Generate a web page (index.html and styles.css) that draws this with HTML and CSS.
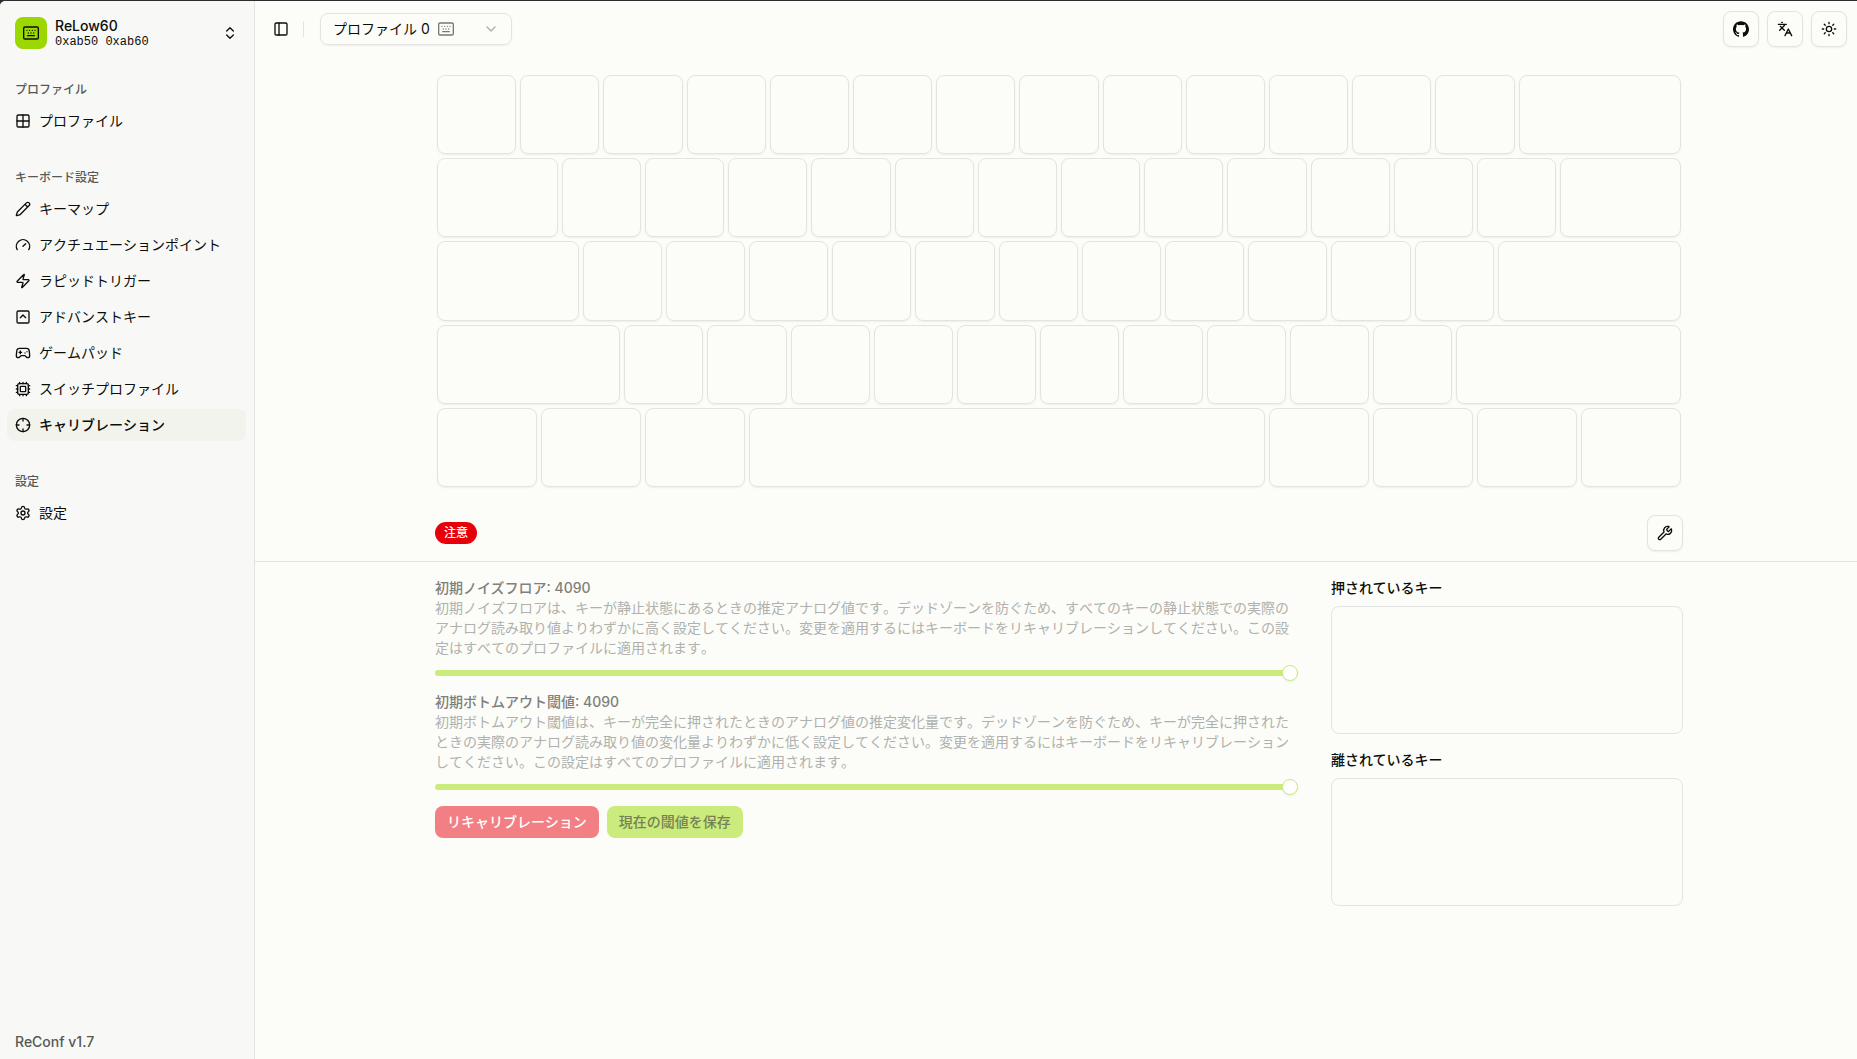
FILE: index.html
```html
<!DOCTYPE html>
<html lang="ja">
<head>
<meta charset="utf-8">
<meta name="viewport" content="width=device-width, initial-scale=1">
<title>ReConf</title>
<link rel="stylesheet" href="styles.css">
</head>
<body>
<div class="app">
  <aside class="sidebar">
    <button class="device" type="button">
      <span class="device-logo"><svg class="icon" viewBox="0 0 24 24"><rect x="1" y="3" width="22" height="18" rx="2"/><path d="M6 8h.01M10 8h.01M14 8h.01M18 8h.01M8 12h.01M12 12h.01M16 12h.01M7 16h10"/></svg></span>
      <span class="device-text"><span class="device-name">ReLow60</span><span class="device-id">0xab50 0xab60</span></span>
      <svg class="icon" viewBox="0 0 24 24"><path d="m7 15 5 5 5-5M7 9l5-5 5 5"/></svg>
    </button>
    <nav class="nav">
      <section class="group">
        <h2 class="group-label">プロファイル</h2>
        <a class="item" href="#profiles"><svg class="icon" viewBox="0 0 24 24"><rect x="3" y="3" width="18" height="18" rx="2"/><path d="M12 3v18M3 12h18"/></svg>プロファイル</a>
      </section>
      <section class="group">
        <h2 class="group-label">キーボード設定</h2>
        <a class="item" href="#keymap"><svg class="icon" viewBox="0 0 24 24"><path d="M21.174 6.812a1 1 0 0 0-3.986-3.987L3.842 16.174a2 2 0 0 0-.5.83l-1.321 4.352a.5.5 0 0 0 .623.622l4.353-1.32a2 2 0 0 0 .83-.497zM15 5l4 4"/></svg>キーマップ</a>
        <a class="item" href="#actuation"><svg class="icon" viewBox="0 0 24 24"><path d="m12 14 4-4M3.34 19a10 10 0 1 1 17.32 0"/></svg>アクチュエーションポイント</a>
        <a class="item" href="#rapid-trigger"><svg class="icon" viewBox="0 0 24 24"><path d="M4 14a1 1 0 0 1-.78-1.63l9.9-10.2a.5.5 0 0 1 .86.46l-1.92 6.02A1 1 0 0 0 13 10h7a1 1 0 0 1 .78 1.63l-9.9 10.2a.5.5 0 0 1-.86-.46l1.92-6.02A1 1 0 0 0 11 14z"/></svg>ラピッドトリガー</a>
        <a class="item" href="#advanced"><svg class="icon" viewBox="0 0 24 24"><rect x="3" y="3" width="18" height="18" rx="2"/><path d="m8 13 4-4 4 4"/></svg>アドバンストキー</a>
        <a class="item" href="#gamepad"><svg class="icon" viewBox="0 0 24 24"><path d="M6 11h4M8 9v4M15 12h.01M18 10h.01M17.32 5H6.68a4 4 0 0 0-3.978 3.59c-.006.052-.01.101-.017.152C2.604 9.416 2 14.456 2 16a3 3 0 0 0 3 3c1 0 1.500-.5 2-1l1.414-1.414A2 2 0 0 1 9.828 16h4.344a2 2 0 0 1 1.414.586L17 18c.5.5 1 1 2 1a3 3 0 0 0 3-3c0-1.545-.604-6.584-.685-7.258-.007-.05-.011-.1-.017-.151A4 4 0 0 0 17.320 5z"/></svg>ゲームパッド</a>
        <a class="item" href="#switches"><svg class="icon" viewBox="0 0 24 24"><rect x="4" y="4" width="16" height="16" rx="2"/><rect x="8" y="8" width="8" height="8" rx="1"/><path d="M12 20v2M12 2v2M17 20v2M17 2v2M2 12h2M2 17h2M2 7h2M20 12h2M20 17h2M20 7h2M7 20v2M7 2v2"/></svg>スイッチプロファイル</a>
        <a class="item item-active" href="#calibration" aria-current="page"><svg class="icon" viewBox="0 0 24 24"><circle cx="12" cy="12" r="10"/><path d="M22 12h-4M6 12H2M12 6V2M12 22v-4"/></svg>キャリブレーション</a>
      </section>
      <section class="group">
        <h2 class="group-label">設定</h2>
        <a class="item" href="#settings"><svg class="icon" viewBox="0 0 24 24"><path d="M9.671 4.136a2.340 2.340 0 0 1 4.659 0 2.340 2.340 0 0 0 3.319 1.915 2.340 2.340 0 0 1 2.330 4.033 2.340 2.340 0 0 0 0 3.831 2.340 2.340 0 0 1-2.330 4.033 2.340 2.340 0 0 0-3.319 1.915 2.340 2.340 0 0 1-4.659 0 2.340 2.340 0 0 0-3.320-1.915 2.340 2.340 0 0 1-2.330-4.033 2.340 2.340 0 0 0 0-3.831A2.340 2.340 0 0 1 6.350 6.051a2.340 2.340 0 0 0 3.319-1.915"/><circle cx="12" cy="12" r="3"/></svg>設定</a>
      </section>
    </nav>
    <footer class="version">ReConf v1.7</footer>
  </aside>

  <main class="main">
    <header class="topbar">
      <button class="ghost" type="button" aria-label="サイドバーを切り替え"><svg class="icon" viewBox="0 0 24 24"><rect x="3" y="3" width="18" height="18" rx="2"/><path d="M9 3v18"/></svg></button>
      <span class="divider"></span>
      <div class="picker">
        <select class="picker-select" aria-label="プロファイル"><option>プロファイル 0</option></select>
        <svg class="icon picker-keyboard" viewBox="0 0 24 24"><rect x="1" y="3" width="22" height="18" rx="2"/><path d="M6 8h.01M10 8h.01M14 8h.01M18 8h.01M8 12h.01M12 12h.01M16 12h.01M7 16h10"/></svg>
        <svg class="icon picker-chevron" viewBox="0 0 24 24"><path d="m6 9 6 6 6-6"/></svg>
      </div>
      <div class="actions">
        <a class="square" href="#github" aria-label="GitHub"><svg class="icon icon-solid" viewBox="0 0 24 24"><path d="M12 .297c-6.630 0-12 5.373-12 12 0 5.303 3.438 9.800 8.205 11.385.6.113.82-.258.82-.577 0-.285-.01-1.040-.015-2.040-3.338.724-4.042-1.610-4.042-1.610C4.422 18.070 3.633 17.700 3.633 17.700c-1.087-.744.084-.729.084-.729 1.205.084 1.838 1.236 1.838 1.236 1.070 1.835 2.809 1.305 3.495.998.108-.776.417-1.305.76-1.605-2.665-.3-5.466-1.332-5.466-5.930 0-1.310.465-2.380 1.235-3.220-.135-.303-.54-1.523.105-3.176 0 0 1.005-.322 3.300 1.230.96-.267 1.980-.399 3-.405 1.020.006 2.040.138 3 .405 2.280-1.552 3.285-1.230 3.285-1.230.645 1.653.24 2.873.12 3.176.765.84 1.230 1.910 1.230 3.220 0 4.610-2.805 5.625-5.475 5.920.42.36.81 1.096.81 2.220 0 1.606-.015 2.896-.015 3.286 0 .315.21.69.825.57C20.565 22.092 24 17.592 24 12.297c0-6.627-5.373-12-12-12"/></svg></a>
        <button class="square" type="button" aria-label="言語"><svg class="icon" viewBox="0 0 24 24"><path d="m5 8 6 6M4 14l6-6 2-3M2 5h12M7 2h1M22 22l-5-10-5 10M14 18h6"/></svg></button>
        <button class="square" type="button" aria-label="テーマ"><svg class="icon" viewBox="0 0 24 24"><circle cx="12" cy="12" r="4"/><path d="M12 2v2M12 20v2M4.930 4.930l1.410 1.410M17.660 17.660l1.410 1.410M2 12h2M20 12h2M6.340 17.660l-1.410 1.410M19.070 4.930l-1.410 1.410"/></svg></button>
      </div>
    </header>

    <div class="container">
      <div class="keyboard">
        <i class="key"></i><i class="key"></i><i class="key"></i><i class="key"></i><i class="key"></i><i class="key"></i><i class="key"></i><i class="key"></i><i class="key"></i><i class="key"></i><i class="key"></i><i class="key"></i><i class="key"></i><i class="key u200"></i>
        <i class="key u150"></i><i class="key"></i><i class="key"></i><i class="key"></i><i class="key"></i><i class="key"></i><i class="key"></i><i class="key"></i><i class="key"></i><i class="key"></i><i class="key"></i><i class="key"></i><i class="key"></i><i class="key u150"></i>
        <i class="key u175"></i><i class="key"></i><i class="key"></i><i class="key"></i><i class="key"></i><i class="key"></i><i class="key"></i><i class="key"></i><i class="key"></i><i class="key"></i><i class="key"></i><i class="key"></i><i class="key u225"></i>
        <i class="key u225"></i><i class="key"></i><i class="key"></i><i class="key"></i><i class="key"></i><i class="key"></i><i class="key"></i><i class="key"></i><i class="key"></i><i class="key"></i><i class="key"></i><i class="key u275"></i>
        <i class="key u125"></i><i class="key u125"></i><i class="key u125"></i><i class="key u625"></i><i class="key u125"></i><i class="key u125"></i><i class="key u125"></i><i class="key u125"></i>
      </div>
      <div class="toolbar">
        <span class="badge">注意</span>
        <button class="square" type="button" aria-label="ツール"><svg class="icon" viewBox="0 0 24 24"><path d="M14.700 6.300a1 1 0 0 0 0 1.400l1.600 1.600a1 1 0 0 0 1.400 0l3.106-3.105c.32-.322.863-.22.983.218a6 6 0 0 1-8.259 7.057l-7.910 7.910a1 1 0 0 1-2.999-3l7.910-7.910a6 6 0 0 1 7.057-8.259c.438.12.54.662.219.984z"/></svg></button>
      </div>
    </div>

    <div class="panel">
      <div class="container columns">
        <div class="settings">
          <div class="field">
            <label class="field-title" for="noise">初期ノイズフロア: 4090</label>
            <p class="field-text">初期ノイズフロアは、キーが静止状態にあるときの推定アナログ値です。デッドゾーンを防ぐため、すべてのキーの静止状態での実際のアナログ読み取り値よりわずかに高く設定してください。変更を適用するにはキーボードをリキャリブレーションしてください。この設定はすべてのプロファイルに適用されます。</p>
            <input class="slider" id="noise" type="range" min="0" max="4090" value="4090" disabled>
          </div>
          <div class="field">
            <label class="field-title" for="bottom">初期ボトムアウト閾値: 4090</label>
            <p class="field-text">初期ボトムアウト閾値は、キーが完全に押されたときのアナログ値の推定変化量です。デッドゾーンを防ぐため、キーが完全に押されたときの実際のアナログ読み取り値の変化量よりわずかに低く設定してください。変更を適用するにはキーボードをリキャリブレーションしてください。この設定はすべてのプロファイルに適用されます。</p>
            <input class="slider" id="bottom" type="range" min="0" max="4090" value="4090" disabled>
          </div>
          <div class="buttons">
            <button class="btn btn-danger" type="button" disabled>リキャリブレーション</button>
            <button class="btn btn-primary" type="button" disabled>現在の閾値を保存</button>
          </div>
        </div>
        <div class="logs">
          <section class="log"><h3 class="log-title">押されているキー</h3><div class="log-box"></div></section>
          <section class="log"><h3 class="log-title">離されているキー</h3><div class="log-box"></div></section>
        </div>
      </div>
    </div>
  </main>
</div>
</body>
</html>
```
FILE: styles.css
```css
:root {
  --bg: #fcfdf9;
  --sidebar: #f8f9f7;
  --border: #e3e4e2;
  --text: #0c0d09;
  --muted: #565853;
  --lime: #9ad800;
  --lime-soft: #cbeb7c;
  --shadow: 0 1px 2px rgb(0 0 0 / 6%);
}

* { box-sizing: border-box; }

body {
  margin: 0;
  background: #2e2a30;
  color: var(--text);
  font: 14px/20px Inter, "Noto Sans CJK JP", sans-serif;
}

h2, h3, p { margin: 0; }

button, select {
  margin: 0;
  color: inherit;
  font: inherit;
}

.icon {
  flex: none;
  width: 16px;
  height: 16px;
  fill: none;
  stroke: currentColor;
  stroke-width: 2;
  stroke-linecap: round;
  stroke-linejoin: round;
}

.icon-solid {
  fill: currentColor;
  stroke: none;
}

.app {
  display: flex;
  min-height: 100vh;
  border-top: 1px solid #2e2a30;
  border-top-left-radius: 6px;
  background: var(--bg);
  overflow: hidden;
}

/* Sidebar */
.sidebar {
  display: flex;
  flex: none;
  flex-direction: column;
  width: 255px;
  padding: 8px 8px 7px 7px;
  border-right: 1px solid var(--border);
  background: var(--sidebar);
}

.device {
  display: flex;
  align-items: center;
  gap: 8px;
  height: 48px;
  padding: 8px;
  border: 0;
  background: none;
  text-align: left;
}

.device-logo {
  display: grid;
  place-items: center;
  width: 32px;
  height: 32px;
  border-radius: 8px;
  background: var(--lime);
}

.device-text {
  display: flex;
  flex: 1;
  flex-direction: column;
}

.device-name {
  font-weight: 500;
  line-height: 19px;
}

.device-id {
  font: 12px/15px "Liberation Mono", monospace;
}

.nav {
  display: flex;
  flex: 1;
  flex-direction: column;
  gap: 24px;
  padding-top: 16px;
}

.group {
  display: flex;
  flex-direction: column;
  gap: 4px;
}

.group-label {
  height: 32px;
  margin-bottom: -4px;
  padding: 0 8px;
  color: var(--muted);
  font-size: 12px;
  font-weight: 500;
  line-height: 34px;
}

.item {
  display: flex;
  align-items: center;
  gap: 8px;
  height: 32px;
  padding: 0 8px;
  border-radius: 8px;
  color: inherit;
  font-kerning: none;
  text-decoration: none;
}

.item-active {
  background: #f2f3ed;
  font-weight: 500;
}

.version {
  padding: 0 8px;
  color: var(--muted);
  font-weight: 500;
}

/* Main area */
.main {
  flex: 1;
  min-width: 0;
}

.topbar {
  display: flex;
  align-items: center;
  height: 56px;
  padding: 0 10px 0 12px;
}

.ghost {
  display: grid;
  place-items: center;
  width: 28px;
  height: 28px;
  padding: 0;
  border: 0;
  background: none;
}

.divider {
  width: 1px;
  height: 16px;
  margin: 0 16px 0 8px;
  background: var(--border);
}

.picker {
  position: relative;
  width: 192px;
}

.picker-select {
  width: 100%;
  height: 32px;
  padding: 0 12px;
  border: 1px solid var(--border);
  border-radius: 8px;
  appearance: none;
  background: transparent;
  box-shadow: var(--shadow);
}

.picker-keyboard,
.picker-chevron {
  position: absolute;
  top: 8px;
  color: #777874;
  pointer-events: none;
}

.picker-keyboard { left: 118px; }

.picker-chevron {
  right: 13px;
  color: #adaeaa;
}

.actions {
  display: flex;
  gap: 8px;
  margin-left: auto;
}

.square {
  display: grid;
  place-items: center;
  width: 36px;
  height: 36px;
  padding: 0;
  border: 1px solid var(--border);
  border-radius: 8px;
  background: var(--bg);
  box-shadow: var(--shadow);
  color: inherit;
}

.container {
  width: 78%;
  max-width: 1248px;
  margin: 0 auto;
  translate: 3px;
}

.keyboard {
  display: grid;
  grid-template-columns: repeat(60, 1fr);
  grid-template-rows: repeat(5, 1fr);
  aspect-ratio: 3;
  margin-top: 16px;
}

.key {
  grid-column: span 4;
  margin: 2px;
  border: 1px solid var(--border);
  border-radius: 8px;
  box-shadow: var(--shadow);
}

.u125 { grid-column: span 5; }
.u150 { grid-column: span 6; }
.u175 { grid-column: span 7; }
.u200 { grid-column: span 8; }
.u225 { grid-column: span 9; }
.u275 { grid-column: span 11; }
.u625 { grid-column: span 25; }

.toolbar {
  display: flex;
  align-items: center;
  justify-content: space-between;
  padding: 26px 0 10px;
}

.badge {
  padding: 3px 9px;
  border-radius: 11px;
  background: #e7000b;
  color: #fff;
  font-size: 12px;
  font-weight: 500;
  line-height: 16px;
}

.panel {
  padding: 16px 0;
  border-top: 1px solid var(--border);
}

.columns {
  display: grid;
  grid-template-columns: minmax(0, 1fr) 352px;
  gap: 33px;
}

.settings,
.logs {
  display: flex;
  flex-direction: column;
  gap: 16px;
}

.field {
  display: flex;
  flex-direction: column;
}

.field-title {
  color: #7f807c;
  font-weight: 500;
}

.field-text {
  color: #b0b1ad;
  font-kerning: none;
}

.slider {
  width: 100%;
  height: 6px;
  margin: 12px 0 0;
  border-radius: 3px;
  appearance: none;
  background: var(--lime-soft);
}

.slider::-webkit-slider-thumb {
  width: 16px;
  height: 16px;
  border: 1px solid var(--lime-soft);
  border-radius: 50%;
  appearance: none;
  background: #fff;
  box-shadow: var(--shadow);
}

.buttons {
  display: flex;
  gap: 8px;
}

.btn {
  height: 32px;
  padding: 0 12px;
  border: 0;
  border-radius: 8px;
  font-weight: 500;
}

.btn-danger {
  background: #f27f84;
  color: #fff;
}

.btn-primary {
  background: var(--lime-soft);
  color: #758255;
}

.log {
  display: flex;
  flex-direction: column;
  gap: 8px;
}

.log-title {
  font-size: 14px;
  font-weight: 500;
}

.log-box {
  height: 128px;
  border: 1px solid var(--border);
  border-radius: 8px;
}
```
